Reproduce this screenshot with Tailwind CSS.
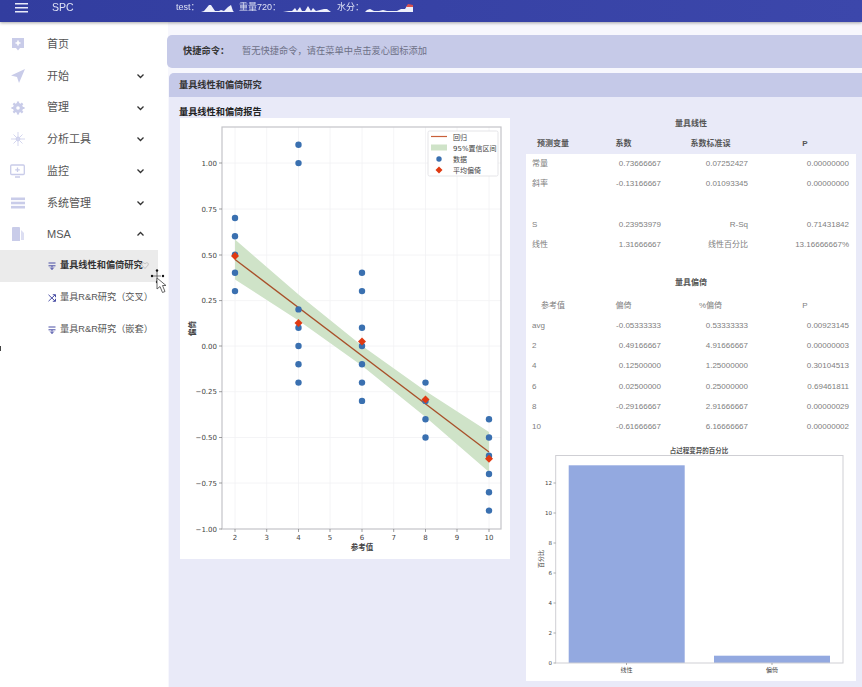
<!DOCTYPE html>
<html lang="zh-CN">
<head>
    <meta charset="UTF-8">
    <meta name="viewport" content="width=device-width, initial-scale=1.0">
    <script src="https://cdn.jsdelivr.net/npm/@tailwindcss/browser@4"></script>
    <title>SPC</title>
</head>
<body class="relative h-[687px] w-[862px] overflow-hidden bg-white font-['Liberation_Sans','Noto_Sans_CJK_SC',sans-serif] text-[#555] blur-[0.4px]">
    <!-- Top bar -->
    <header class="relative z-10 flex h-[22px] items-center whitespace-nowrap bg-gradient-to-r from-[#323d9f] to-[#3c47ab] pb-[7px] text-[#dfe2f5] shadow-[0_1px_3px_rgba(0,0,0,0.35)]">
        <svg class="ml-[15px] h-[12px] w-[13px]" viewBox="0 0 13 12" fill="#e8eaf8">
            <rect y="1" width="13" height="1.5"/><rect y="5" width="13" height="1.5"/><rect y="9" width="13" height="1.5"/>
        </svg>
        <span class="ml-[24px] w-[124px] text-[10.5px]">SPC</span>
        <span class="w-[25px] text-[9px]">test：</span>
        <svg class="h-[8px] w-[33px]" viewBox="0 0 33 8" fill="#eef0fb"><path d="M0 8 L3 7 L8 1 L10 1 L14 7 L18 7 L20 6 L23 7 L27 3 L30 1 L32 7 L33 8Z"/></svg>
        <span class="ml-[5px] w-[44px] text-[9px]">重量720：</span>
        <svg class="h-[8px] w-[48px]" viewBox="0 0 48 8" fill="#eef0fb"><path d="M0 8 L6 7 L9 7 L12 4 L14 7 L17 3 L19 7 L22 7 L25 2 L28 7 L30 4 L33 7 L37 6 L41 5 L44 5 L48 8Z"/></svg>
        <span class="ml-[6px] w-[28px] text-[9px]">水分：</span>
        <svg class="h-[8px] w-[48px]" viewBox="0 0 48 8" fill="#eef0fb"><path d="M0 8 L2 6 L5 5 L9 7 L14 7 L18 6 L22 7 L28 7 L32 7 L36 5 L40 5 L42 2 L48 3 L48 8Z"/><path d="M41 3 L43 0 L48 1 L48 3Z" fill="#d9534f"/></svg>
    </header>

    <div class="flex h-[665px]">
        <!-- Sidebar -->
        <aside class="w-[168px] shrink-0 bg-white pt-[6.5px] text-[11px]">
            <a class="flex h-[31.7px] items-center">
                <svg class="ml-[11px] h-[14px] w-[14px]" viewBox="0 0 14 14" fill="#c9cce9"><path d="M1 1 H13 V11 H9 L7 13.5 L5 11 H1Z"/><path d="M7 3.5 V8.5 M4.5 6 H9.5" stroke="#fff" stroke-width="1.6"/></svg>
                <span class="ml-[22px]">首页</span>
            </a>
            <a class="flex h-[31.7px] items-center">
                <svg class="ml-[11px] h-[14px] w-[14px]" viewBox="0 0 14 14" fill="#c9cce9"><path d="M14 0 L0 6.5 L6 8 L8 14Z"/></svg>
                <span class="ml-[22px] w-[89px]">开始</span>
                <svg class="h-[6px] w-[9px]" viewBox="0 0 8 6" fill="none" stroke="#333" stroke-width="1.3"><path d="M1 1.5 L4 4.5 L7 1.5"/></svg>
            </a>
            <a class="flex h-[31.7px] items-center">
                <svg class="ml-[11px] h-[14px] w-[14px]" viewBox="0 0 14 14" fill="none" stroke="#c9cce9"><circle cx="7" cy="7" r="3.4" stroke-width="3.2"/><path d="M7 0.5 V3 M7 11 V13.5 M0.5 7 H3 M11 7 H13.5 M2.4 2.4 L4 4 M10 10 L11.6 11.6 M11.6 2.4 L10 4 M4 10 L2.4 11.6" stroke-width="2.2"/></svg>
                <span class="ml-[22px] w-[89px]">管理</span>
                <svg class="h-[6px] w-[9px]" viewBox="0 0 8 6" fill="none" stroke="#333" stroke-width="1.3"><path d="M1 1.5 L4 4.5 L7 1.5"/></svg>
            </a>
            <a class="flex h-[31.7px] items-center">
                <svg class="ml-[11px] h-[14px] w-[14px]" viewBox="0 0 14 14" fill="#c9cce9"><circle cx="7" cy="7" r="2.4"/><path d="M7 0 V14 M0 7 H14 M2.5 2.5 L11.5 11.5 M11.5 2.5 L2.5 11.5" stroke="#d5d7ef" stroke-width="1"/></svg>
                <span class="ml-[22px] w-[89px]">分析工具</span>
                <svg class="h-[6px] w-[9px]" viewBox="0 0 8 6" fill="none" stroke="#333" stroke-width="1.3"><path d="M1 1.5 L4 4.5 L7 1.5"/></svg>
            </a>
            <a class="flex h-[31.7px] items-center">
                <svg class="ml-[10px] h-[14px] w-[15px]" viewBox="0 0 15 14" fill="none" stroke="#c9cce9" stroke-width="1.3"><rect x="0.7" y="1" width="13.6" height="9.5" rx="1"/><path d="M7.5 3.5 V8 M5.2 5.8 H9.8 M5 13 H10"/></svg>
                <span class="ml-[22px] w-[89px]">监控</span>
                <svg class="h-[6px] w-[9px]" viewBox="0 0 8 6" fill="none" stroke="#333" stroke-width="1.3"><path d="M1 1.5 L4 4.5 L7 1.5"/></svg>
            </a>
            <a class="flex h-[31.7px] items-center">
                <svg class="ml-[11px] h-[14px] w-[14px]" viewBox="0 0 14 14" fill="#c9cce9"><rect y="1.5" width="14" height="2.6"/><rect y="5.7" width="14" height="2.6"/><rect y="9.9" width="14" height="2.6"/></svg>
                <span class="ml-[22px] w-[89px]">系统管理</span>
                <svg class="h-[6px] w-[9px]" viewBox="0 0 8 6" fill="none" stroke="#333" stroke-width="1.3"><path d="M1 1.5 L4 4.5 L7 1.5"/></svg>
            </a>
            <a class="flex h-[31.7px] items-center">
                <svg class="ml-[12px] h-[14px] w-[12px]" viewBox="0 0 12 14" fill="#c9cce9"><path d="M0 1 Q0 0 1 0 H7 Q8 0 8 1 V14 H0Z"/><path d="M9 3 L12 6 V13 H9Z" fill="#dcdef2"/></svg>
                <span class="ml-[23px] w-[89px]">MSA</span>
                <svg class="h-[6px] w-[9px]" viewBox="0 0 8 6" fill="none" stroke="#333" stroke-width="1.3"><path d="M1 4.5 L4 1.5 L7 4.5"/></svg>
            </a>
            <!-- MSA submenu -->
            <a class="relative flex h-[32px] w-[158px] items-center bg-[#ebebeb] text-[9.2px] font-bold text-[#333]">
                <svg class="ml-[48px] h-[8px] w-[8px]" viewBox="0 0 8 8" fill="none" stroke="#4a4fa5" stroke-width="1"><path d="M0.5 1 H7.5 M0.5 3.8 H7.5 M4 3.8 V7.5 M2.2 5.5 L4 7.5 L5.8 5.5"/></svg>
                <span class="ml-[4px]">量具线性和偏倚研究</span>
                <svg class="absolute left-[141px] top-[12px] h-[7px] w-[8px]" viewBox="0 0 8 7" fill="none" stroke="#bbb" stroke-width="0.8"><path d="M4 6.5 L0.8 3 Q0 1 2 0.7 Q3.4 0.6 4 2 Q4.6 0.6 6 0.7 Q8 1 7.2 3Z"/></svg>
            </a>
            <a class="flex h-[32px] items-center text-[9.2px]">
                <svg class="ml-[48px] h-[8px] w-[8px]" viewBox="0 0 8 8" fill="none" stroke="#4a4fa5" stroke-width="1"><path d="M0.5 0.8 L7.2 7.2 M0.5 7.2 L7.2 0.8 M4.8 0.7 H7.5 V3.2 M4.8 7.3 H7.5 V4.8"/></svg>
                <span class="ml-[4px]">量具R&amp;R研究（交叉）</span>
            </a>
            <a class="flex h-[32px] items-center text-[9.2px]">
                <svg class="ml-[48px] h-[8px] w-[8px]" viewBox="0 0 8 8" fill="none" stroke="#4a4fa5" stroke-width="1"><path d="M0.5 1 H7.5 M0.5 3.8 H7.5 M4 3.8 V7.5 M2.2 5.5 L4 7.5 L5.8 5.5"/></svg>
                <span class="ml-[4px]">量具R&amp;R研究（嵌套）</span>
            </a>
        </aside>

        <main class="min-w-0 flex-1 bg-[#f7f7fd] pt-[13px]">
            <!-- Quick commands -->
            <div class="-ml-[1px] flex h-[33px] items-center rounded-l-[5px] bg-[#c6cae8] pl-[16px] pt-[1px] text-[9.25px]">
                <span class="w-[59px] font-bold text-[#333]">快捷命令：</span>
                <span class="text-[#6d7086]">暂无快捷命令，请在菜单中点击爱心图标添加</span>
            </div>

            <section class="ml-[1px] mt-[5px] h-[614px] rounded-tl-[5px] bg-[#e9eaf8]">
                <div class="flex h-[24px] items-center rounded-tl-[5px] bg-[#c5c9e8] pl-[10px] pt-[1px] text-[9.2px] font-bold text-[#333]">量具线性和偏倚研究</div>
                <div class="flex pl-[10px] pt-[10px]">
                    <div class="w-[331px] shrink-0">
                        <h2 class="h-[11px] text-[9.2px] font-bold leading-[11px] text-[#222]">量具线性和偏倚报告</h2>
                        <!-- Regression chart -->
                        <svg class="ml-[1px] block h-[441px] w-[330px] bg-white" viewBox="180 118 330 441" font-family="'DejaVu Sans','Noto Sans CJK SC',sans-serif" font-size="7" fill="#444">
                            <g stroke="#f1f1f4" stroke-width="0.8">
                                <path d="M235 127V529M266.7 127V529M298.5 127V529M330 127V529M362 127V529M393.7 127V529M425.5 127V529M457 127V529M489 127V529"/>
                                <path d="M222 163H501M222 209H501M222 255H501M222 300.6H501M222 346H501M222 391.7H501M222 437.5H501M222 483H501"/>
                            </g>
                            <polygon fill="#cfe3c8" points="235,239.5 298.5,294.6 362,345.7 425.5,391 489,432 489,472 425.5,417 362,365.7 298.5,320.6 235,279.5"/>
                            <line x1="235" y1="259.5" x2="489" y2="452" stroke="#a8502a" stroke-width="1.3"/>
                            <rect x="222" y="127" width="279" height="402" fill="none" stroke="#c4c4c8" stroke-width="1.2"/>
                            <g fill="#3a70b0">
                                <circle cx="235" cy="218" r="3.2"/><circle cx="235" cy="236.3" r="3.2"/><circle cx="235" cy="254.6" r="3.2"/><circle cx="235" cy="272.8" r="3.2"/><circle cx="235" cy="291.1" r="3.2"/>
                                <circle cx="298.5" cy="144.8" r="3.2"/><circle cx="298.5" cy="163.1" r="3.2"/><circle cx="298.5" cy="309.4" r="3.2"/><circle cx="298.5" cy="327.7" r="3.2"/><circle cx="298.5" cy="346" r="3.2"/><circle cx="298.5" cy="364.3" r="3.2"/><circle cx="298.5" cy="382.6" r="3.2"/>
                                <circle cx="362" cy="272.8" r="3.2"/><circle cx="362" cy="291.1" r="3.2"/><circle cx="362" cy="327.7" r="3.2"/><circle cx="362" cy="346" r="3.2"/><circle cx="362" cy="364.3" r="3.2"/><circle cx="362" cy="382.6" r="3.2"/><circle cx="362" cy="400.9" r="3.2"/>
                                <circle cx="425.5" cy="382.6" r="3.2"/><circle cx="425.5" cy="400.9" r="3.2"/><circle cx="425.5" cy="419.2" r="3.2"/><circle cx="425.5" cy="437.5" r="3.2"/>
                                <circle cx="489" cy="419.2" r="3.2"/><circle cx="489" cy="437.5" r="3.2"/><circle cx="489" cy="455.7" r="3.2"/><circle cx="489" cy="474" r="3.2"/><circle cx="489" cy="492.3" r="3.2"/><circle cx="489" cy="510.6" r="3.2"/>
                            </g>
                            <g fill="#e03a12">
                                <polygon points="235,252 239,256 235,260 231,256"/><polygon points="298.5,319 302.5,323 298.5,327 294.5,323"/><polygon points="362,337.4 366,341.4 362,345.4 358,341.4"/><polygon points="425.5,395.4 429.5,399.4 425.5,403.4 421.5,399.4"/><polygon points="489,454.8 493,458.8 489,462.8 485,458.8"/>
                            </g>
                            <g stroke="#777" stroke-width="0.7">
                                <path d="M219 163H222M219 209H222M219 255H222M219 300.6H222M219 346H222M219 391.7H222M219 437.5H222M219 483H222M219 529H222"/>
                                <path d="M235 529V532M266.7 529V532M298.5 529V532M330 529V532M362 529V532M393.7 529V532M425.5 529V532M457 529V532M489 529V532"/>
                            </g>
                            <g text-anchor="end">
                                <text x="217" y="165.5">1.00</text><text x="217" y="211.5">0.75</text><text x="217" y="257.5">0.50</text><text x="217" y="303">0.25</text><text x="217" y="348.5">0.00</text><text x="217" y="394">−0.25</text><text x="217" y="440">−0.50</text><text x="217" y="485.5">−0.75</text><text x="217" y="531.5">−1.00</text>
                            </g>
                            <g text-anchor="middle">
                                <text x="235" y="540">2</text><text x="266.7" y="540">3</text><text x="298.5" y="540">4</text><text x="330" y="540">5</text><text x="362" y="540">6</text><text x="393.7" y="540">7</text><text x="425.5" y="540">8</text><text x="457" y="540">9</text><text x="489" y="540">10</text>
                                <text x="362" y="550" font-size="7.5" font-weight="bold">参考值</text>
                                <text transform="translate(195 328.5) rotate(-90)" font-size="7.5" font-weight="bold">偏倚</text>
                            </g>
                            <!-- Legend -->
                            <rect x="428" y="131" width="70" height="45" rx="1.5" fill="#fff" stroke="#dedee2" stroke-width="0.8"/>
                            <line x1="431" y1="136.5" x2="447" y2="136.5" stroke="#c9603a" stroke-width="1.2"/>
                            <rect x="431" y="144.5" width="16" height="6" fill="#cfe3c8"/>
                            <circle cx="439" cy="159" r="2.7" fill="#3a70b0"/>
                            <polygon points="439,166.5 442.5,170 439,173.5 435.5,170" fill="#e03a12"/>
                            <g font-size="7"><text x="453" y="139.5">回归</text><text x="453" y="150.5">95%置信区间</text><text x="453" y="162">数据</text><text x="453" y="173">平均偏倚</text></g>
                        </svg>
                    </div>

                    <!-- Result tables -->
                    <div class="ml-[16px] mt-[8px] w-[330px] shrink-0">
                        <div class="flex h-[18px] items-center justify-center text-[8px] font-bold text-[#555]">量具线性</div>
                        <table class="w-full table-fixed border-collapse text-[8px] text-[#808080]">
                            <colgroup><col class="w-[54px]"><col class="w-[87px]"><col class="w-[87px]"><col class="w-[102px]"></colgroup>
                            <thead class="font-bold text-[#555]">
                                <tr class="h-[21px]"><th>预测变量</th><th>系数</th><th>系数标准误</th><th>P</th></tr>
                            </thead>
                            <tbody class="bg-white">
                                <tr class="h-[20.2px]"><td class="pl-[6px]">常量</td><td class="pr-[6px] text-right">0.73666667</td><td class="pr-[6px] text-right">0.07252427</td><td class="pr-[7px] text-right">0.00000000</td></tr>
                                <tr class="h-[20.2px]"><td class="pl-[6px]">斜率</td><td class="pr-[6px] text-right">-0.13166667</td><td class="pr-[6px] text-right">0.01093345</td><td class="pr-[7px] text-right">0.00000000</td></tr>
                                <tr class="h-[20.2px]"><td colspan="4"></td></tr>
                                <tr class="h-[20.2px]"><td class="pl-[6px]">S</td><td class="pr-[6px] text-right">0.23953979</td><td class="pr-[6px] text-right">R-Sq</td><td class="pr-[7px] text-right">0.71431842</td></tr>
                                <tr class="h-[20.2px]"><td class="pl-[6px]">线性</td><td class="pr-[6px] text-right">1.31666667</td><td class="pr-[6px] text-right">线性百分比</td><td class="pr-[7px] text-right">13.16666667%</td></tr>
                            </tbody>
                        </table>
                        <div class="bg-white">
                            <div class="flex h-[41px] items-end justify-center pb-[7px] text-[8px] font-bold text-[#555]">量具偏倚</div>
                            <table class="w-full table-fixed border-collapse text-[8px] text-[#808080]">
                                <colgroup><col class="w-[54px]"><col class="w-[87px]"><col class="w-[87px]"><col class="w-[102px]"></colgroup>
                                <thead>
                                    <tr class="h-[20px]"><th class="font-normal">参考值</th><th class="font-normal">偏倚</th><th class="font-normal">%偏倚</th><th class="font-normal">P</th></tr>
                                </thead>
                                <tbody>
                                    <tr class="h-[20.2px]"><td class="pl-[6px]">avg</td><td class="pr-[6px] text-right">-0.05333333</td><td class="pr-[6px] text-right">0.53333333</td><td class="pr-[7px] text-right">0.00923145</td></tr>
                                    <tr class="h-[20.2px]"><td class="pl-[6px]">2</td><td class="pr-[6px] text-right">0.49166667</td><td class="pr-[6px] text-right">4.91666667</td><td class="pr-[7px] text-right">0.00000003</td></tr>
                                    <tr class="h-[20.2px]"><td class="pl-[6px]">4</td><td class="pr-[6px] text-right">0.12500000</td><td class="pr-[6px] text-right">1.25000000</td><td class="pr-[7px] text-right">0.30104513</td></tr>
                                    <tr class="h-[20.2px]"><td class="pl-[6px]">6</td><td class="pr-[6px] text-right">0.02500000</td><td class="pr-[6px] text-right">0.25000000</td><td class="pr-[7px] text-right">0.69461811</td></tr>
                                    <tr class="h-[20.2px]"><td class="pl-[6px]">8</td><td class="pr-[6px] text-right">-0.29166667</td><td class="pr-[6px] text-right">2.91666667</td><td class="pr-[7px] text-right">0.00000029</td></tr>
                                    <tr class="h-[20.2px]"><td class="pl-[6px]">10</td><td class="pr-[6px] text-right">-0.61666667</td><td class="pr-[6px] text-right">6.16666667</td><td class="pr-[7px] text-right">0.00000002</td></tr>
                                </tbody>
                            </table>
                            <!-- Bar chart -->
                            <svg class="mt-[4px] block h-[240px] w-[330px]" viewBox="526 441 330 240" font-family="'DejaVu Sans','Noto Sans CJK SC',sans-serif" font-size="5.5" fill="#444">
                                <text x="699" y="453" text-anchor="middle" font-size="6.5" font-weight="bold" fill="#555">占过程变异的百分比</text>
                                <rect x="568.7" y="465.3" width="116" height="197.7" fill="#93a9e0"/>
                                <rect x="714" y="655.7" width="116" height="7.3" fill="#93a9e0"/>
                                <rect x="555.7" y="455.5" width="287.3" height="207.5" fill="none" stroke="#cfcfd4" stroke-width="1"/>
                                <g stroke="#777" stroke-width="0.6"><path d="M553.5 663H555.7M553.5 633H555.7M553.5 603H555.7M553.5 573H555.7M553.5 543H555.7M553.5 513H555.7M553.5 483H555.7M626.5 663V665M772 663V665"/></g>
                                <g text-anchor="end"><text x="552" y="665">0</text><text x="552" y="635">2</text><text x="552" y="605">4</text><text x="552" y="575">6</text><text x="552" y="545">8</text><text x="552" y="515">10</text><text x="552" y="485">12</text></g>
                                <g text-anchor="middle"><text x="626.5" y="672" font-size="6">线性</text><text x="772" y="672" font-size="6">偏倚</text><text transform="translate(543 559) rotate(-90)" font-size="6">百分比</text></g>
                            </svg>
                        </div>
                    </div>
                </div>
            </section>
        </main>
    </div>

    <!-- Screen-recording cursor -->
    <svg class="absolute left-[150px] top-[268px] h-[26px] w-[18px]" viewBox="0 0 18 26">
        <path d="M7 3 V13 M3 8 H11" stroke="#444" stroke-width="0.7"/>
        <g fill="#111"><circle cx="7" cy="2.5" r="1.2"/><circle cx="7" cy="14" r="1.2"/><circle cx="2" cy="8" r="1.2"/><circle cx="13" cy="8" r="1.2"/></g>
        <path d="M7 10 L7 21 L10 18.5 L12.5 24.5 L15 23.5 L12.5 17.5 L16 17.5Z" fill="#fff" stroke="#555" stroke-width="0.9"/>
    </svg>
    <div class="absolute left-0 top-[346px] h-[5px] w-[1px] bg-[#444]"></div>
</body>
</html>
